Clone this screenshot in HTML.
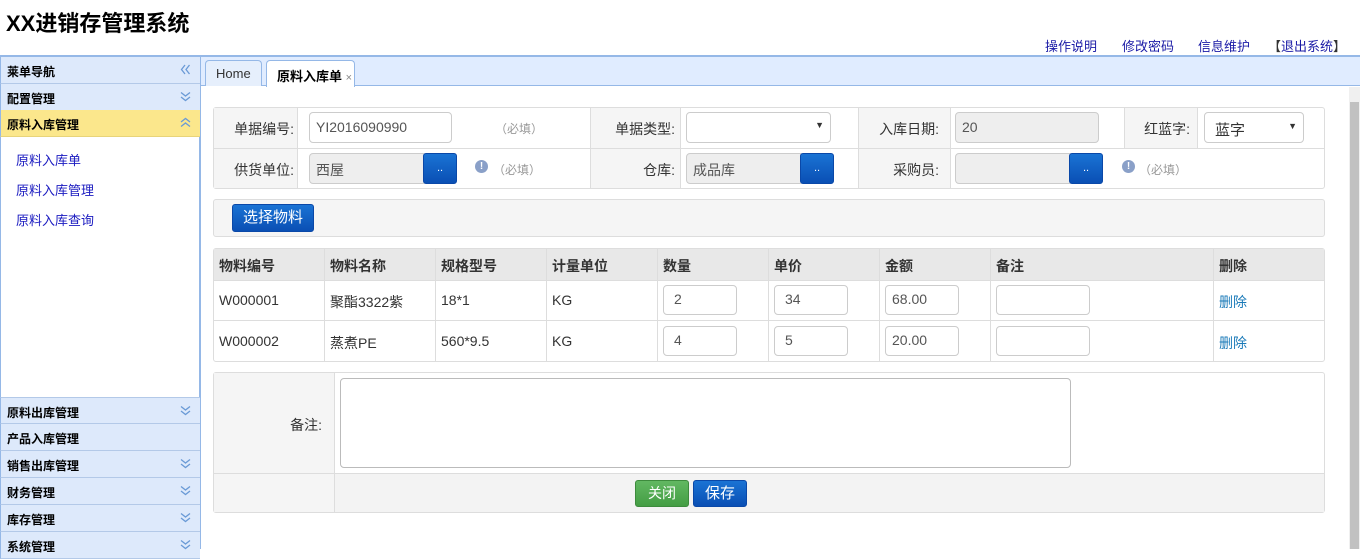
<!DOCTYPE html>
<html><head><meta charset="utf-8"><style>
*{box-sizing:border-box;margin:0;padding:0}
body{width:1360px;height:549px;overflow:hidden;position:relative;background:#fff;font-family:"Liberation Sans","Noto Sans CJK SC",sans-serif;font-size:14px;color:#333}
.a{position:absolute}
.title{left:6px;top:6px;font-size:22px;font-weight:bold;color:#000}
.top a{color:#1a1aa6;text-decoration:none;font-size:13px}
.sh{position:absolute;left:0;width:200px;height:27px;background:#dde9fb;border-bottom:1px solid #b3c9e8;border-left:1px solid #95b8e7;font-size:12px;font-weight:bold;color:#000;padding:6px 0 0 6px}
.sh svg{position:absolute;right:9px;top:7px}
.item{position:absolute;left:16px;color:#1a1ac0;font-size:13px}
.lab{position:absolute;text-align:right;font-size:14px;color:#333}
.inp{position:absolute;border:1px solid #ccc;border-radius:4px;background:#fff;height:31px;padding:6px 6px;font-size:14px;color:#555}
.gr{background:#eee}
.btn{position:absolute;background:linear-gradient(#1a73d4,#0a4fb4);border:1px solid #0a48a8;border-radius:3px;color:#fff;font-size:14px;text-align:center}
.sm{width:34px;height:31px;line-height:29px;font-size:11px}
.req{position:absolute;color:#999;font-size:12px}
.info{position:absolute;width:13px;height:13px;border-radius:50%;background:#8aa0c8;color:#fff;font-size:10px;text-align:center;line-height:13px;font-weight:bold}
.cell{position:absolute;font-size:14px}
.th{font-weight:bold;color:#333}
.vl{position:absolute;width:1px;background:#ddd}
.hl{position:absolute;height:1px;background:#ddd}
</style></head><body>
<svg width="0" height="0" style="position:absolute"><defs>
<symbol id="dn" viewBox="0 0 11 11"><path d="M1 1.5l4.5 3.5 4.5-3.5M1 6l4.5 3.5 4.5-3.5" fill="none" stroke="#6a9ad6" stroke-width="1.3"/></symbol>
<symbol id="up" viewBox="0 0 11 11"><path d="M1 5l4.5-3.5 4.5 3.5M1 9.5l4.5-3.5 4.5 3.5" fill="none" stroke="#6a9ad6" stroke-width="1.3"/></symbol>
<symbol id="lf" viewBox="0 0 11 11"><path d="M5 1l-3.5 4.5 3.5 4.5M9.5 1l-3.5 4.5 3.5 4.5" fill="none" stroke="#6a9ad6" stroke-width="1.3"/></symbol>
</defs></svg>
<div class="a title">XX进销存管理系统</div>
<div class="a top" style="left:1045px;top:36px"><a>操作说明</a></div>
<div class="a top" style="left:1122px;top:36px"><a>修改密码</a></div>
<div class="a top" style="left:1198px;top:36px"><a>信息维护</a></div>
<div class="a top" style="left:1268px;top:36px"><a style="color:#333">【</a><a>退出系统</a><a style="color:#333">】</a></div>
<div class="a" style="left:0;top:55px;width:1360px;height:2px;background:#95b8e7"></div>
<div class="a" style="left:199px;top:57px;width:2px;height:492px;background:#95b8e7"></div>
<div class="a" style="left:0;top:57px;width:1px;height:492px;background:#95b8e7"></div>
<div class="sh" style="top:57px">莱单导航<svg width="11" height="11"><use href="#lf"/></svg></div>
<div class="sh" style="top:84px">配置管理<svg width="11" height="11"><use href="#dn"/></svg></div>
<div class="sh" style="top:110px;background:#fbe78c;border-bottom-color:#e8d47a">原料入库管理<svg width="11" height="11"><use href="#up"/></svg></div>
<div class="item" style="top:150px">原料入库单</div>
<div class="item" style="top:180px">原料入库管理</div>
<div class="item" style="top:210px">原料入库查询</div>
<div class="sh" style="top:397px;border-top:1px solid #b3c9e8">原料出库管理<svg width="11" height="11"><use href="#dn"/></svg></div>
<div class="sh" style="top:424px">产品入库管理</div>
<div class="sh" style="top:451px">销售出库管理<svg width="11" height="11"><use href="#dn"/></svg></div>
<div class="sh" style="top:478px">财务管理<svg width="11" height="11"><use href="#dn"/></svg></div>
<div class="sh" style="top:505px">库存管理<svg width="11" height="11"><use href="#dn"/></svg></div>
<div class="sh" style="top:532px">系统管理<svg width="11" height="11"><use href="#dn"/></svg></div>
<div class="a" style="left:201px;top:57px;width:1159px;height:29px;background:#e0ecff;border-bottom:1px solid #95b8e7"></div>
<div class="a" style="left:205px;top:60px;width:57px;height:26px;background:#e6effc;border:1px solid #95b8e7;border-bottom:none;border-radius:4px 4px 0 0;font-size:13px;padding:5px 0 0 10px;color:#333">Home</div>
<div class="a" style="left:266px;top:60px;width:89px;height:27px;background:#fff;border:1px solid #95b8e7;border-bottom:none;border-radius:4px 4px 0 0;font-size:13px;padding:5px 0 0 10px;font-weight:bold;color:#000">原料入库单 <span style="font-weight:normal;color:#888;font-size:11px">×</span></div>
<div class="a" style="left:1349px;top:87px;width:11px;height:462px;background:#f0f0f0"></div>
<div class="a" style="left:1350px;top:102px;width:9px;height:447px;background:#c1c1c1"></div>
<div class="a" style="left:213px;top:107px;width:1112px;height:82px;border:1px solid #ddd;border-radius:3px"></div>
<div class="a" style="left:214px;top:108px;width:83px;height:80px;background:#f5f5f5"></div>
<div class="a" style="left:591px;top:108px;width:89px;height:80px;background:#f5f5f5"></div>
<div class="a" style="left:859px;top:108px;width:91px;height:80px;background:#f5f5f5"></div>
<div class="a" style="left:1125px;top:108px;width:72px;height:40px;background:#f5f5f5"></div>
<div class="hl" style="left:214px;top:148px;width:1110px"></div>
<div class="vl" style="left:297px;top:108px;height:80px"></div>
<div class="vl" style="left:590px;top:108px;height:80px"></div>
<div class="vl" style="left:680px;top:108px;height:80px"></div>
<div class="vl" style="left:858px;top:108px;height:80px"></div>
<div class="vl" style="left:950px;top:108px;height:80px"></div>
<div class="vl" style="left:1124px;top:108px;height:40px"></div>
<div class="vl" style="left:1197px;top:108px;height:40px"></div>
<div class="lab" style="left:214px;width:80px;top:119px">单据编号:</div>
<div class="inp" style="left:309px;top:112px;width:143px">YI2016090990</div>
<div class="req" style="left:495px;top:120px">（必填）</div>
<div class="lab" style="left:591px;width:84px;top:119px">单据类型:</div>
<div class="inp" style="left:686px;top:112px;width:145px"><span style="position:absolute;right:6px;top:7px;font-size:9px;color:#333">▼</span></div>
<div class="lab" style="left:859px;width:80px;top:119px">入库日期:</div>
<div class="inp gr" style="left:955px;top:112px;width:144px">20</div>
<div class="lab" style="left:1125px;width:65px;top:119px">红蓝字:</div>
<div class="inp" style="left:1204px;top:112px;width:100px;font-size:15px;color:#333;padding-left:10px">蓝字<span style="position:absolute;right:6px;top:8px;font-size:9px">▼</span></div>
<div class="lab" style="left:214px;width:80px;top:160px">供货单位:</div>
<div class="inp gr" style="left:309px;top:153px;width:118px">西屋</div>
<div class="btn sm" style="left:423px;top:153px">..</div>
<div class="info" style="left:475px;top:160px">!</div>
<div class="req" style="left:493px;top:161px">（必填）</div>
<div class="lab" style="left:591px;width:84px;top:160px">仓库:</div>
<div class="inp gr" style="left:686px;top:153px;width:118px">成品库</div>
<div class="btn sm" style="left:800px;top:153px">..</div>
<div class="lab" style="left:859px;width:80px;top:160px">采购员:</div>
<div class="inp gr" style="left:955px;top:153px;width:118px"></div>
<div class="btn sm" style="left:1069px;top:153px">..</div>
<div class="info" style="left:1122px;top:160px">!</div>
<div class="req" style="left:1139px;top:161px">（必填）</div>
<div class="a" style="left:213px;top:199px;width:1112px;height:38px;background:#f5f5f5;border:1px solid #ddd;border-radius:3px"></div>
<div class="btn" style="left:232px;top:204px;width:82px;height:28px;line-height:26px;font-size:15px">选择物料</div>
<div class="a" style="left:213px;top:248px;width:1112px;height:114px;border:1px solid #ddd;border-radius:3px"></div>
<div class="a" style="left:214px;top:249px;width:1110px;height:31px;background:#e8e8e8"></div>
<div class="hl" style="left:214px;top:280px;width:1110px"></div>
<div class="hl" style="left:214px;top:320px;width:1110px"></div>
<div class="vl" style="left:324px;top:249px;height:112px"></div>
<div class="vl" style="left:435px;top:249px;height:112px"></div>
<div class="vl" style="left:546px;top:249px;height:112px"></div>
<div class="vl" style="left:657px;top:249px;height:112px"></div>
<div class="vl" style="left:768px;top:249px;height:112px"></div>
<div class="vl" style="left:879px;top:249px;height:112px"></div>
<div class="vl" style="left:990px;top:249px;height:112px"></div>
<div class="vl" style="left:1213px;top:249px;height:112px"></div>
<div class="cell th" style="left:219px;top:256px">物料编号</div>
<div class="cell th" style="left:330px;top:256px">物料名称</div>
<div class="cell th" style="left:441px;top:256px">规格型号</div>
<div class="cell th" style="left:552px;top:256px">计量单位</div>
<div class="cell th" style="left:663px;top:256px">数量</div>
<div class="cell th" style="left:774px;top:256px">单价</div>
<div class="cell th" style="left:885px;top:256px">金额</div>
<div class="cell th" style="left:996px;top:256px">备注</div>
<div class="cell th" style="left:1219px;top:256px">删除</div>
<div class="cell" style="left:219px;top:292px">W000001</div>
<div class="cell" style="left:330px;top:292px">聚酯3322紫</div>
<div class="cell" style="left:441px;top:292px">18*1</div>
<div class="cell" style="left:552px;top:292px">KG</div>
<div class="inp" style="left:663px;top:285px;width:74px;height:30px;padding:5px 10px">2</div>
<div class="inp" style="left:774px;top:285px;width:74px;height:30px;padding:5px 10px">34</div>
<div class="inp" style="left:885px;top:285px;width:74px;height:30px;padding:5px 6px">68.00</div>
<div class="inp" style="left:996px;top:285px;width:94px;height:30px"></div>
<div class="cell" style="left:1219px;top:292px;color:#1a7ab8">删除</div>
<div class="cell" style="left:219px;top:333px">W000002</div>
<div class="cell" style="left:330px;top:333px">蒸煮PE</div>
<div class="cell" style="left:441px;top:333px">560*9.5</div>
<div class="cell" style="left:552px;top:333px">KG</div>
<div class="inp" style="left:663px;top:326px;width:74px;height:30px;padding:5px 10px">4</div>
<div class="inp" style="left:774px;top:326px;width:74px;height:30px;padding:5px 10px">5</div>
<div class="inp" style="left:885px;top:326px;width:74px;height:30px;padding:5px 6px">20.00</div>
<div class="inp" style="left:996px;top:326px;width:94px;height:30px"></div>
<div class="cell" style="left:1219px;top:333px;color:#1a7ab8">删除</div>
<div class="a" style="left:213px;top:372px;width:1112px;height:141px;border:1px solid #ddd;border-radius:3px"></div>
<div class="a" style="left:214px;top:373px;width:120px;height:139px;background:#f5f5f5"></div>
<div class="a" style="left:334px;top:473px;width:990px;height:39px;background:#f3f3f3"></div>
<div class="hl" style="left:214px;top:473px;width:1110px"></div>
<div class="vl" style="left:334px;top:373px;height:139px"></div>
<div class="lab" style="left:214px;width:108px;top:415px">备注:</div>
<div class="a" style="left:340px;top:378px;width:731px;height:90px;border:1px solid #bbb;border-radius:4px;background:#fff"></div>
<div class="btn" style="left:635px;top:480px;width:54px;height:27px;line-height:25px;background:linear-gradient(#62b862,#449d44);border-color:#3d8b3d">关闭</div>
<div class="btn" style="left:693px;top:480px;width:54px;height:27px;line-height:25px;font-size:15px">保存</div>
</body></html>
